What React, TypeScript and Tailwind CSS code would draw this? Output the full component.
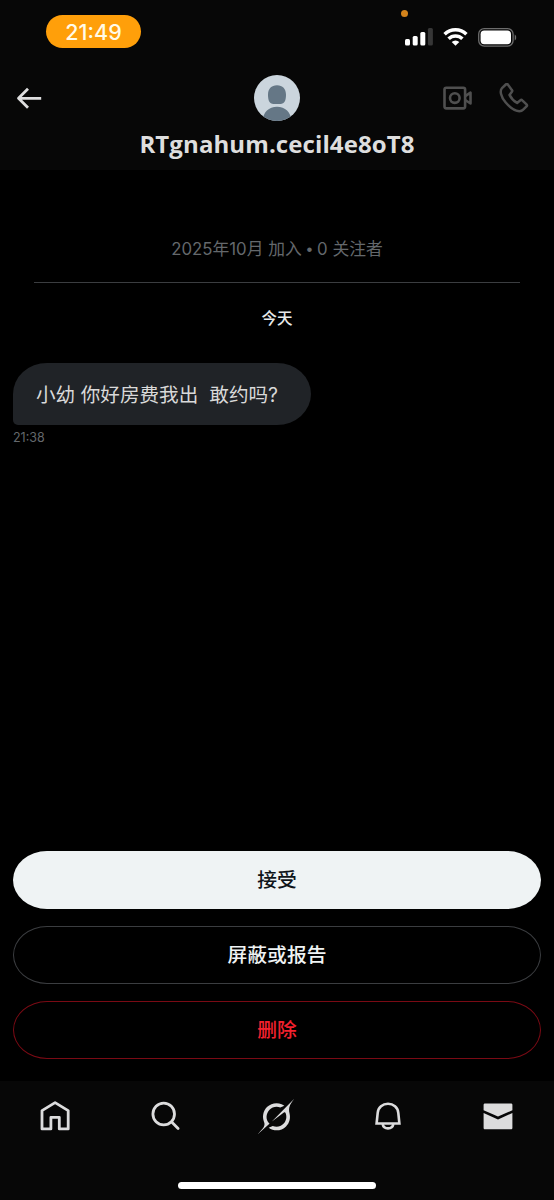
import type { ReactNode } from "react";
import clsx from "clsx";

const NAV = [
  { label: "Home", icon: <HomeIcon /> },
  { label: "Search", icon: <SearchIcon /> },
  { label: "Grok", icon: <GrokIcon /> },
  { label: "Notifications", icon: <BellIcon /> },
  { label: "Messages", icon: <MailIcon /> },
];

const ACTIONS = [
  { label: "接受", className: "h-[58px] mb-[17px] bg-[#eff3f4] text-[#0f1419]" },
  { label: "屏蔽或报告", className: "h-[58px] mb-[17px] border border-[#3b3d40] text-[#eff3f4]" },
  { label: "删除", className: "h-[58px] border border-[#7a0a14] text-[#f4212e]" },
];

function HomeIcon() {
  return (
    <svg width="36" height="36" viewBox="0 0 36 36" fill="none" stroke="currentColor" strokeWidth="2.8" strokeLinejoin="round">
      <path d="M5 12.600 18.100 4.600l13.100 8v18.300H22.300V19.300h-8.400v11.600H5z" />
    </svg>
  );
}

function SearchIcon() {
  return (
    <svg width="36" height="36" viewBox="0 0 36 36" fill="none" stroke="currentColor" strokeWidth="2.8" strokeLinecap="round">
      <circle cx="15.700" cy="16" r="10.800" />
      <path d="m23.700 24 6.400 6.400" />
    </svg>
  );
}

function GrokIcon() {
  return (
    <svg className="-ml-px" width="36" height="35" viewBox="0 0 33 32" fill="currentColor">
      <path d="M12.745 20.54l10.97-8.19c.539-.4 1.307-.244 1.564.38 1.349 3.288.746 7.241-1.938 9.955-2.683 2.714-6.417 3.31-9.83 1.954l-3.728 1.745c5.347 3.697 11.84 2.782 15.898-1.324 3.219-3.255 4.216-7.692 3.284-11.693l.008.009c-1.351-5.878.332-8.227 3.782-13.031L33 0l-4.54 4.59v-.014L12.743 20.544m-2.263 1.987c-3.837-3.707-3.175-9.446.1-12.755 2.42-2.449 6.388-3.448 9.852-1.979l3.72-1.737c-.67-.49-1.53-1.017-2.515-1.387-4.455-1.854-9.789-.931-13.41 2.728-3.483 3.523-4.579 8.94-2.697 13.561 1.405 3.454-.899 5.898-3.22 8.364C1.49 30.2.666 31.074 0 32l10.478-9.466" />
    </svg>
  );
}

function BellIcon() {
  return (
    <svg width="36" height="36" viewBox="0 0 36 36" fill="none" stroke="currentColor" strokeWidth="2.6">
      <path d="M6.600 25.500 7.700 14.800C8.200 9.200 12.600 5.700 18 5.700s9.800 3.500 10.300 9.100l1.100 10.700z" />
      <path d="M12.600 26c.5 2.600 2.600 4.400 5.400 4.400s4.900-1.800 5.400-4.400" />
    </svg>
  );
}

function MailIcon() {
  return (
    <svg className="-ml-px" width="36" height="36" viewBox="0 0 36 36" fill="currentColor">
      <path d="M3.600 6.700c0-.7.600-1.300 1.300-1.300h26.200c.7 0 1.300.6 1.300 1.300v5.500L18 18.600 3.600 12.200z" />
      <path d="M3.600 15 18 21.600 32.400 15v15c0 .7-.6 1.300-1.300 1.300H4.900c-.7 0-1.300-.6-1.300-1.300z" />
    </svg>
  );
}

function StatusBar() {
  return (
    <div className="relative flex h-[63px] items-start justify-between pr-[37px] pl-[46px] pt-[15px]">
      <div className="flex h-[33px] w-[95px] items-center justify-center rounded-full bg-[#ff9f0a] pt-px font-['Inter'] text-[21.5px] font-medium text-[#fffbe8]">
        21:49
      </div>
      <div className="absolute top-[10px] left-[401px] size-[7px] rounded-full bg-[#d3831b]" />
      <div className="flex items-center gap-[10px] pt-[13px] text-white">
        <svg width="28" height="19" viewBox="0 0 28 19" fill="currentColor">
          <rect x="0" y="11" width="5" height="6.500" rx="1.500" />
          <rect x="7.700" y="8" width="5" height="9.500" rx="1.500" />
          <rect x="15.300" y="3.900" width="5" height="13.600" rx="1.500" />
          <rect x="22.900" y="0" width="5" height="17.500" rx="1.500" fill="#363636" />
        </svg>
        <svg width="25" height="19" viewBox="0 0 25 19" fill="none" stroke="currentColor" strokeWidth="3.500">
          <path d="M1.600 6.200a15.600 15.600 0 0 1 21.800 0" />
          <path d="M5.600 10.800a9.700 9.700 0 0 1 13.800 0" />
          <path d="m8.700 13.900 3.800 3.800 3.800-3.800a5.500 5.500 0 0 0-7.600 0z" fill="currentColor" stroke="none" />
        </svg>
        <svg width="39" height="19" viewBox="0 0 39 19">
          <rect x=".7" y=".7" width="34.400" height="17.400" rx="5.500" fill="none" stroke="#6c6c6c" strokeWidth="1.300" />
          <rect x="2.600" y="2.600" width="30.400" height="13.600" rx="3.600" fill="#fff" />
          <path d="M36.700 6.400c2 .9 2 5.100 0 6z" fill="#6c6c6c" />
        </svg>
      </div>
    </div>
  );
}

function Avatar() {
  return (
    <svg width="46" height="46" viewBox="0 0 46 46">
      <defs>
        <clipPath id="avatar">
          <circle cx="23" cy="23" r="23" />
        </clipPath>
      </defs>
      <g clipPath="url(#avatar)">
        <path fill="#cbd5dd" d="M0 0h46v46H0z" />
        <path fill="#657786" d="M23 10.300c5.700 0 9 3.700 9 9.500 0 5.700-1.500 9.200-5.500 9.200h-7c-4 0-5.500-3.500-5.500-9.200 0-5.800 3.300-9.500 9-9.500z" />
        <path fill="#657786" d="M8.500 46c.7-9 6.300-14.300 14.500-14.300S36.800 37 37.500 46z" />
      </g>
    </svg>
  );
}

function ChatHeader() {
  return (
    <header className="h-[170px] bg-[#070707]">
      <StatusBar />
      <div className="grid grid-cols-3 items-center pt-3 pr-[25px] pl-4">
        <svg className="text-[#dededf]" width="26" height="24" viewBox="0 0 26 24" fill="none" stroke="currentColor" strokeWidth="2.800" strokeLinejoin="round">
          <path d="M25.200 12.300H2.500M12 2.800 2.500 12.300l9.500 9.500" />
        </svg>
        <div className="ml-[9px] flex justify-center">
          <Avatar />
        </div>
        <div className="flex items-center justify-end gap-[26px] text-[#4f4f4f]">
          <svg width="30" height="24" viewBox="0 0 30 24" fill="none" stroke="currentColor" strokeWidth="2.600" strokeLinejoin="round">
            <rect x="1.500" y="1.800" width="20.600" height="20.600" rx="1.800" />
            <circle cx="11.800" cy="12.100" r="4.800" />
            <path d="m22.200 10.200 5.300-3.500v10.800l-5.300-3.500" />
          </svg>
          <svg width="30" height="30" viewBox="0 0 30 30" fill="none" stroke="currentColor" strokeWidth="2.500" strokeLinejoin="round">
            <path d="M8.800 1.500c-.6-.6-1.400-.6-2 0L3 5.200C.6 7.600 1.700 13.700 6.500 19.300c4.400 5.200 9.700 8.900 13.900 8.900 1.600 0 2.800-.5 3.800-1.500l3.300-3.300c.6-.6.600-1.400 0-2l-4.200-4c-.5-.5-1.300-.6-1.900-.1l-3.300 2.600c-3.200-1.700-5.900-4.500-7.600-8l2.400-3.100c.5-.6.400-1.400-.1-1.900z" />
          </svg>
        </div>
      </div>
      <h1 className="mt-[6px] text-center font-['Open_Sans'] text-[24px] leading-[34px] font-bold tracking-[0.1px] whitespace-nowrap text-[#dedede]">
        RTgnahum.cecil4e8oT8
      </h1>
    </header>
  );
}

function Conversation({ children }: { children: ReactNode }) {
  return (
    <main className="flex h-[911px] flex-col px-[13px]">
      <div className="mx-[21px] mt-[66px] border-b border-[#3b3d40] pb-[19px] text-center text-[16.800px] leading-[27px] text-[#64686c]">
        2025年10月 加入 <span className="font-['Liberation_Sans']">•</span> 0 关注者
      </div>
      <div className="mt-[24px] text-center text-[15.500px] leading-6 font-medium text-[#e7e9ea]">今天</div>
      <div className="mt-[32px] flex h-[62px] w-[298px] items-center rounded-[34px/31px] rounded-bl-[5px] bg-[#202327] pt-[3px] pl-[23px] text-[19.600px] whitespace-pre text-[#d9d9d9]">
        小幼 你好房费我出  敢约吗?
      </div>
      <div className="mt-[4px] text-[12.500px] leading-[18px] text-[#64686c]">21:38</div>
      {children}
    </main>
  );
}

export default function App() {
  return (
    <div className="h-[1200px] w-[554px] overflow-hidden bg-black font-['Inter','Noto_Sans_CJK_SC',sans-serif]">
      <ChatHeader />
      <Conversation>
        <div className="mt-auto mb-[22px] flex flex-col">
          {ACTIONS.map((action) => (
            <button
              key={action.label}
              className={clsx("w-full rounded-[34px/29px] pt-px text-[19.800px] font-medium", action.className)}
            >
              {action.label}
            </button>
          ))}
        </div>
      </Conversation>
      <nav className="flex h-[119px] flex-col items-center bg-[#070707] text-[#dcdcdd]">
        <div className="grid w-full grid-cols-5 pt-[17px]">
          {NAV.map((item) => (
            <button key={item.label} aria-label={item.label} className="flex h-9 items-center justify-center">
              {item.icon}
            </button>
          ))}
        </div>
        <div className="mt-12 h-[7px] w-[198px] rounded-full bg-white" />
      </nav>
    </div>
  );
}
